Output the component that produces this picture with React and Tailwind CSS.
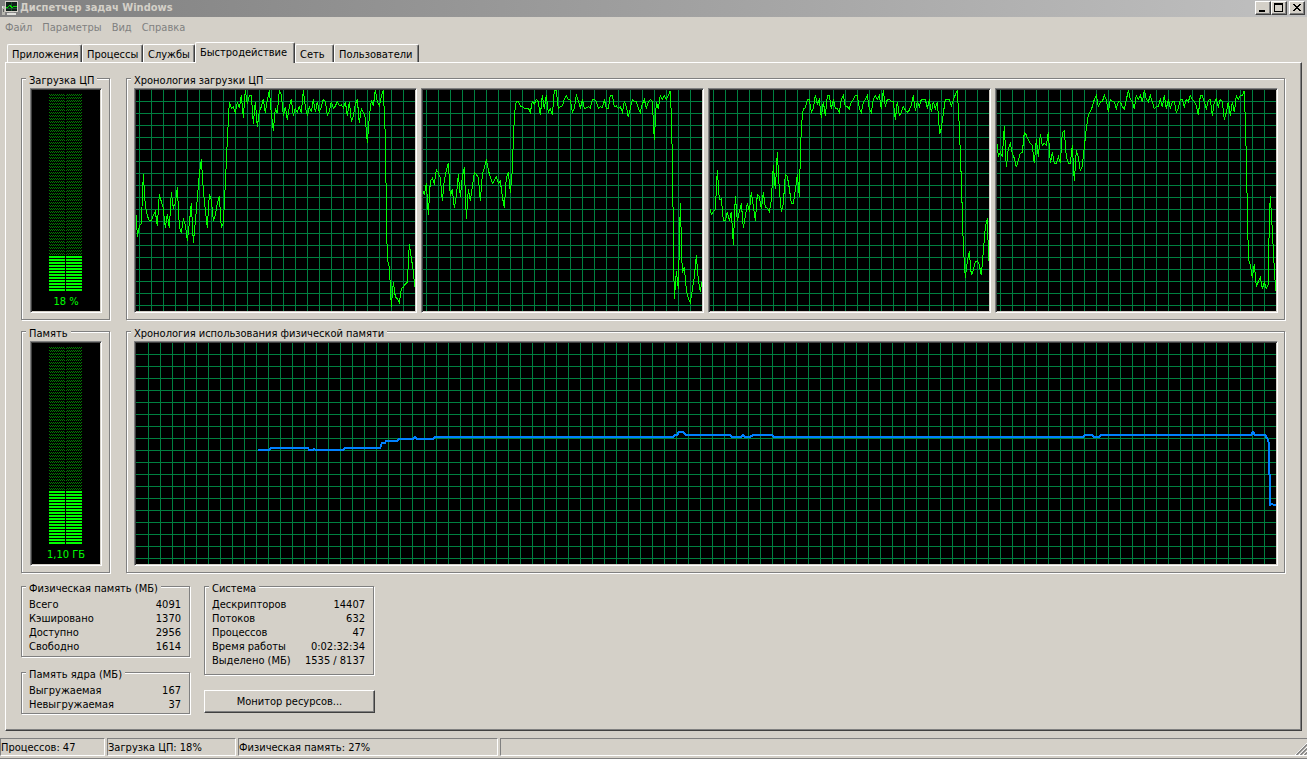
import React from "react";

const CPU_CHARTS = [
  {
    id: "cpu0",
    x0: 18,
    points:
      "19,405 22,470 28,438 34,430 40,282 46,378 52,408 58,422 64,422 70,405 76,395 82,437 88,343 94,365 99,380 106,443 112,403 118,443 124,337 130,384 136,370 142,322 148,440 154,460 160,415 166,435 172,482 178,430 184,370 190,488 196,425 202,355 208,282 214,238 220,330 226,390 232,443 238,343 244,360 250,422 256,405 262,370 268,349 274,443 280,430 286,310 292,180 298,65 304,85 310,80 316,98 322,66 328,85 334,46 340,113 346,30 352,73 358,46 364,46 370,131 376,65 382,140 388,95 394,80 400,58 406,98 412,60 418,30 424,100 430,152 436,85 442,100 448,30 454,45 460,107 466,80 472,119 478,80 484,58 490,107 496,85 502,97 508,80 514,100 520,30 526,80 532,107 538,80 544,97 550,58 556,97 562,65 568,97 574,80 580,58 586,65 592,107 598,95 604,65 610,85 616,78 622,66 628,78 634,75 640,83 646,65 652,107 658,65 664,125 670,107 676,72 682,58 688,130 694,85 700,97 706,115 712,190 718,110 724,60 730,78 736,30 742,65 748,78 754,50 760,30 766,170 770,440 772,540 778,560 784,680 790,607 796,650 802,657 808,668 814,625 820,622 826,612 832,607 838,493 844,535 850,572 854,620",
  },
  {
    id: "cpu1",
    x0: 15,
    points:
      "15,333 19,345 25,310 31,404 37,304 43,295 49,310 55,270 61,278 67,295 73,362 79,300 85,272 91,250 97,348 103,328 109,383 115,350 121,282 127,350 133,290 139,262 145,416 151,328 157,362 163,320 169,277 175,284 181,292 187,362 193,285 199,262 205,238 211,270 217,292 223,310 229,302 235,290 241,310 247,304 253,350 259,383 265,292 271,277 277,338 283,270 287,150 292,75 296,64 302,66 308,80 314,80 320,86 332,86 337,97 343,64 349,72 355,58 361,66 367,106 373,46 379,86 385,46 391,97 397,86 403,106 409,31 415,31 421,86 427,80 433,78 439,58 445,46 451,58 457,60 463,97 469,85 475,46 481,62 487,86 493,58 499,86 511,80 517,85 523,58 529,58 535,65 541,85 547,80 553,83 559,58 565,86 571,86 577,46 583,46 589,80 595,78 601,85 607,80 613,97 619,65 625,80 631,112 637,85 643,58 649,65 655,65 661,85 667,97 673,72 679,58 685,86 691,65 697,58 703,65 709,180 715,65 721,86 727,46 733,58 739,46 745,58 751,46 757,32 761,135 764,295 767,540 769,658 775,574 781,627 787,370 793,580 799,560 805,630 811,655 817,668 823,630 829,590 835,526 841,600 847,635 851,605",
  },
  {
    id: "cpu2",
    x0: 18,
    points:
      "19,388 22,404 28,395 34,388 40,270 46,360 52,357 58,422 64,422 70,395 76,422 82,395 88,494 94,349 100,422 106,395 112,370 118,443 124,410 130,370 136,395 142,337 148,378 154,422 160,343 166,349 172,388 178,337 184,382 190,384 196,395 202,360 208,256 214,328 220,217 226,330 232,395 238,370 244,283 250,289 256,325 262,370 268,370 274,330 280,283 286,350 290,190 294,120 298,86 304,84 310,58 316,58 322,97 328,85 334,46 340,72 346,58 352,113 358,65 364,107 370,46 376,46 382,86 388,58 394,86 400,86 406,97 412,58 418,46 424,80 430,80 436,86 442,66 448,58 454,46 460,46 466,85 472,97 478,66 484,58 490,46 496,86 502,97 508,58 514,46 520,58 526,46 532,86 538,30 544,80 550,58 556,58 562,65 568,65 574,119 580,65 586,107 592,97 598,80 604,90 610,97 616,90 622,75 628,46 634,92 640,65 646,80 652,58 664,58 670,86 676,58 682,97 688,65 694,86 700,65 707,163 712,145 718,100 724,58 736,58 742,78 748,60 754,44 760,32 766,140 772,300 778,500 784,593 790,545 796,514 802,586 808,570 814,545 820,542 826,555 832,586 838,515 844,440 850,415 854,542",
  },
  {
    id: "cpu3",
    x0: 21,
    points:
      "22,192 25,230 31,217 37,230 43,139 49,262 55,205 61,190 67,220 73,235 79,262 85,240 91,220 97,217 103,157 109,165 115,180 121,190 127,196 133,250 139,178 145,230 151,163 157,196 163,190 169,196 175,157 181,250 187,217 193,250 199,250 205,230 211,250 217,157 223,152 229,232 235,250 241,250 247,196 253,304 259,211 265,232 271,272 277,258 283,200 289,145 295,105 301,95 307,80 313,58 319,46 325,80 331,66 337,65 343,46 349,60 355,97 361,58 367,65 373,66 379,86 385,65 391,66 397,80 403,86 409,60 415,30 421,58 427,65 433,86 439,46 445,58 451,46 457,65 463,30 469,58 475,65 481,46 487,66 493,86 499,80 505,80 511,58 517,80 523,46 529,86 535,58 541,86 547,65 553,65 559,97 565,85 571,58 577,58 583,80 589,58 595,65 601,46 607,58 613,65 619,78 625,106 631,46 637,46 643,66 649,86 655,62 661,58 667,107 673,65 679,58 685,80 691,58 697,65 703,119 709,97 715,65 721,107 727,65 733,97 739,46 745,58 751,46 757,46 763,32 767,155 770,280 773,450 776,540 781,555 787,593 793,553 799,620 805,605 811,592 817,626 823,607 829,626 835,612 838,410 841,349 847,450 851,530 857,634",
  },
];

const MEMORY_POINTS =
  "258,450 269,450 271,448 308,448 309,450 313,450 314,449 316,450 343,450 345,448 380,448 382,443 385,443 386,441 397,441 399,439 413,439 415,437 417,439 433,439 435,437 673,437 675,435 677,435 679,432 683,432 686,435 730,435 732,437 741,437 743,435 745,437 750,437 753,435 772,435 774,437 1083,437 1085,435 1092,435 1094,437 1099,437 1101,435 1251,435 1253,432 1255,435 1265,435 1267,438 1269,443 1269,474 1270,475 1270,505 1272,504 1274,505 1276,505";

const WELL =
  "border border-t-[#808080] border-l-[#808080] border-r-white border-b-white bg-black p-px shadow-[inset_1px_1px_0_#404040,inset_-1px_-1px_0_#d4d0c8]";
const RAISED =
  "border border-t-white border-l-white border-r-[#404040] border-b-[#404040] bg-[#d4d0c8] shadow-[inset_-1px_-1px_0_#808080]";

function range(n) {
  return Array.from({ length: n }, (_, i) => i);
}

function Group({ title, className = "", children }) {
  return (
    <fieldset
      className={
        "min-w-0 border border-[#808080] pl-[7px] shadow-[inset_1px_1px_0_#fff,1px_1px_0_#fff] " +
        className
      }
    >
      <legend className="-ml-[3px] bg-[#d4d0c8] px-[3px] pt-[5px] leading-[14px]">{title}</legend>
      {children}
    </fieldset>
  );
}

function Meter({ id, label, name, lit }) {
  const rows = 66;
  const dim = (rows - lit) * 3;
  return (
    <div className={"ml-px flex w-[72px] flex-col items-center " + WELL}>
      <svg
        viewBox="0 0 33 198"
        className="mt-1 mr-px h-[198px] w-[33px]"
        shapeRendering="crispEdges"
        role="img"
        aria-label={name}
      >
        <defs>
          <pattern id={id} width="2" height="3" patternUnits="userSpaceOnUse">
            <rect x="0" y="0" width="1" height="1" fill="#008000" />
            <rect x="1" y="1" width="1" height="1" fill="#008000" />
          </pattern>
        </defs>
        <rect x="0" y="0" width="16" height={dim} fill={`url(#${id})`} />
        <rect x="17" y="0" width="16" height={dim} fill={`url(#${id})`} />
        {range(lit).map((i) => (
          <g key={i} fill="#00ff00">
            <rect x="0" y={dim + i * 3} width="16" height="2" />
            <rect x="17" y={dim + i * 3} width="16" height="2" />
          </g>
        ))}
      </svg>
      <span className="mt-[3px] mb-0.5 leading-[14px] text-[#00ff00]">{label}</span>
    </div>
  );
}

function CpuChart({ x0, points, name }) {
  return (
    <div className={"min-w-0 " + WELL}>
      <svg
        viewBox={`${x0} 30 837 663`}
        preserveAspectRatio="none"
        className="block h-[221px] w-full"
        shapeRendering="crispEdges"
        role="img"
        aria-label={name}
      >
        <g fill="#008040">
          {range(23).map((i) => (
            <rect key={i} x={x0 + 9 + i * 36} y="30" width="3" height="663" />
          ))}
          {range(18).map((i) => (
            <rect key={i} x={x0} y={63 + i * 36} width="837" height="3" />
          ))}
        </g>
        <polyline points={points} fill="none" stroke="#00ff00" strokeWidth="3" />
      </svg>
    </div>
  );
}

function MemoryChart() {
  return (
    <div className={WELL}>
      <svg
        viewBox="136 343 1140 221"
        preserveAspectRatio="none"
        className="block h-[221px] w-full"
        shapeRendering="crispEdges"
        role="img"
        aria-label="Хронология использования физической памяти"
      >
        <g fill="#008040">
          {range(94).map((i) => (
            <rect key={i} x={148 + i * 12} y="343" width="1" height="221" />
          ))}
          {range(18).map((i) => (
            <rect key={i} x="136" y={354 + i * 12} width="1140" height="1" />
          ))}
        </g>
        <polyline points={MEMORY_POINTS} fill="none" stroke="#0080ff" strokeWidth="2" />
      </svg>
    </div>
  );
}

function Stats({ rows }) {
  return (
    <table className="w-full leading-[14px]">
      <tbody>
        {rows.map(([label, value]) => (
          <tr key={label}>
            <th scope="row" className="p-0 text-left font-normal whitespace-nowrap">
              {label}
            </th>
            <td className="p-0 text-right whitespace-nowrap">{value}</td>
          </tr>
        ))}
      </tbody>
    </table>
  );
}

const TABS = [
  ["Приложения", "w-[75px]"],
  ["Процессы", "w-[61px]"],
  ["Службы", "w-[52px]"],
  ["Быстродействие", "w-[100px]"],
  ["Сеть", "w-[39px]"],
  ["Пользователи", "w-[85px]"],
];

function Tab({ label, width, active }) {
  return (
    <button
      type="button"
      role="tab"
      aria-selected={active}
      className={
        "rounded-t-[2px] border border-b-0 border-t-white border-l-white border-r-[#404040] bg-[#d4d0c8] pl-1 text-left whitespace-nowrap shadow-[inset_-1px_0_0_#808080] " +
        width +
        (active ? " relative z-10 -mb-px h-[21px] pb-px" : " h-[18px] pt-0.5")
      }
    >
      {label}
    </button>
  );
}

function AppIcon() {
  return (
    <svg viewBox="0 0 16 16" className="h-4 w-4 shrink-0" shapeRendering="crispEdges" aria-hidden="true">
      <rect x="0" y="5" width="3" height="9" fill="#b8b8b0" />
      <rect x="0" y="5" width="1" height="2" fill="#e8e8e8" />
      <rect x="1" y="8" width="1" height="3" fill="#606060" />
      <rect x="3" y="0" width="13" height="11" fill="#d4d0c8" />
      <rect x="4" y="1" width="11" height="9" fill="#10201a" />
      <rect x="4" y="7" width="11" height="1" fill="#1c5030" />
      <rect x="9" y="1" width="1" height="9" fill="#1c5030" />
      <polyline points="4,6 6,6 8,4 10,7 12,5 15,5" fill="none" stroke="#00e000" strokeWidth="1" />
      <rect x="7" y="11" width="5" height="1" fill="#909090" />
      <rect x="5" y="12" width="9" height="2" fill="#e0e0dc" />
      <rect x="5" y="14" width="9" height="1" fill="#808080" />
    </svg>
  );
}

function CaptionButton({ name, children }) {
  return (
    <button type="button" aria-label={name} className={"h-[14px] w-4 " + RAISED}>
      <svg viewBox="0 0 14 12" className="block h-3 w-[14px]" shapeRendering="crispEdges">
        {children}
      </svg>
    </button>
  );
}

function StatusPane({ className, children }) {
  return (
    <div
      className={
        "flex h-[18px] border border-t-[#808080] border-l-[#808080] border-r-white border-b-white whitespace-nowrap " +
        className
      }
    >
      {children}
    </div>
  );
}

export default function App() {
  return (
    <div className="flex min-h-screen flex-col border-b border-[#808080] bg-[#d4d0c8] font-['DejaVu_Sans_Condensed','Noto_Sans',sans-serif] text-[11px] leading-[14px] text-black">
      <header className="flex h-[17px] items-start bg-linear-to-r from-[#808080] to-[#c0c0c0] px-0.5 pt-px">
        <AppIcon />
        <h1 className="ml-0.5 flex-1 font-bold whitespace-nowrap text-[#d4d0c8]">
          Диспетчер задач Windows
        </h1>
        <div className="flex">
          <CaptionButton name="Свернуть">
            <rect x="3" y="8" width="6" height="2" />
          </CaptionButton>
          <CaptionButton name="Развернуть">
            <path d="M2 1h9v9h-9zM3 3v6h7v-6z" fillRule="evenodd" />
          </CaptionButton>
          <div className="ml-0.5 flex">
            <CaptionButton name="Закрыть">
              <path d="M3 2h2v1h1v1h2v-1h1v-1h2v1h-1v1h-1v1h-1v1h1v1h1v1h1v1h-2v-1h-1v-1h-2v1h-1v1h-2v-1h1v-1h1v-1h1v-1h-1v-1h-1v-1h-1z" />
            </CaptionButton>
          </div>
        </div>
      </header>

      <nav className="flex gap-2.5 px-[5px] pt-1 pb-[7px] text-[#808080]">
        <button type="button">Файл</button>
        <button type="button">Параметры</button>
        <button type="button">Вид</button>
        <button type="button">Справка</button>
      </nav>

      <div role="tablist" className="flex items-end pl-[7px]">
        {TABS.map(([label, width], i) => (
          <Tab key={label} label={label} width={width} active={i === 3} />
        ))}
      </div>

      <main className="mx-[5px] flex-1 border border-t-white border-l-white border-r-[#404040] border-b-[#404040] pt-1.5 pr-4 pb-4 pl-[15px] shadow-[inset_-1px_-1px_0_#808080]">
        <div className="grid grid-cols-[auto_1fr] gap-x-4 gap-y-0.5">
          <Group title="Загрузка ЦП" className="pr-[7px] pb-1.5">
            <Meter id="dim-cpu" name="Загрузка ЦП" label="18 %" lit={12} />
          </Group>
          <Group title="Хронология загрузки ЦП" className="pr-1.5 pb-1.5">
            <div className="grid grid-cols-4 gap-1">
              {CPU_CHARTS.map((c, i) => (
                <CpuChart key={c.id} x0={c.x0} points={c.points} name={`ЦП ${i}`} />
              ))}
            </div>
          </Group>
          <Group title="Память" className="pr-[7px] pb-1.5">
            <Meter id="dim-mem" name="Память" label="1,10 ГБ" lit={18} />
          </Group>
          <Group title="Хронология использования физической памяти" className="pr-1.5 pb-1.5">
            <MemoryChart />
          </Group>
        </div>

        <div className="mt-1 flex items-start gap-[14px]">
          <div className="flex w-[169px] flex-col gap-1.5">
            <Group title="Физическая память (МБ)" className="pt-0.5 pr-2 pb-0.5">
              <Stats
                rows={[
                  ["Всего", "4091"],
                  ["Кэшировано", "1370"],
                  ["Доступно", "2956"],
                  ["Свободно", "1614"],
                ]}
              />
            </Group>
            <Group title="Память ядра (МБ)" className="pt-0.5 pr-2 pb-px">
              <Stats
                rows={[
                  ["Выгружаемая", "167"],
                  ["Невыгружаемая", "37"],
                ]}
              />
            </Group>
          </div>
          <div className="flex w-[171px] flex-col gap-[15px]">
            <Group title="Система" className="mr-px pt-0.5 pr-2 pb-1.5">
              <Stats
                rows={[
                  ["Дескрипторов", "14407"],
                  ["Потоков", "632"],
                  ["Процессов", "47"],
                  ["Время работы", "0:02:32:34"],
                  ["Выделено (МБ)", "1535 / 8137"],
                ]}
              />
            </Group>
            <button type="button" className={"h-[23px] " + RAISED}>
              Монитор ресурсов...
            </button>
          </div>
        </div>
      </main>

      <footer className="mt-[7px] mb-0.5 flex gap-0.5">
        <StatusPane className="w-[105px] items-end">Процессов: 47</StatusPane>
        <StatusPane className="w-[129px] items-end">Загрузка ЦП: 18%</StatusPane>
        <StatusPane className="w-[260px] items-end">Физическая память: 27%</StatusPane>
        <StatusPane className="flex-1 items-end justify-end border-r-0">
          <svg viewBox="0 0 12 12" className="h-3 w-3" aria-hidden="true">
            <path d="M0 12L12 0M4 12L12 4M8 12L12 8" stroke="#fff" strokeWidth="1" />
            <path d="M1.5 12L12 1.5M5.5 12L12 5.5M9.5 12L12 9.5" stroke="#808080" strokeWidth="1.5" />
          </svg>
        </StatusPane>
      </footer>
    </div>
  );
}
